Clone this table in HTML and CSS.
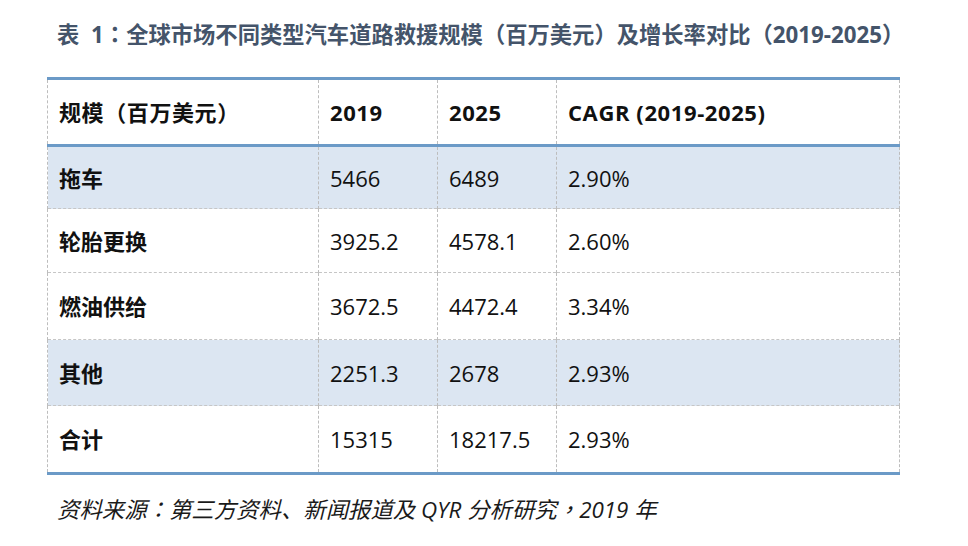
FILE: index.html
```html
<!DOCTYPE html>
<html lang="zh-CN">
<head>
<meta charset="utf-8">
<link rel="stylesheet" href="styles.css">
</head>
<body>
<div class="page">
  <h1 class="title">表 1<span class="pc" lang="zh-TW">：</span>全球市场不同类型汽车道路救援规模（百万美元）及增长率对比（2019-2025）</h1>
  <table class="data">
    <thead>
      <tr>
        <th class="c1">规模（百万美元）</th>
        <th class="c2">2019</th>
        <th class="c3">2025</th>
        <th class="c4">CAGR (2019-2025)</th>
      </tr>
    </thead>
    <tbody>
      <tr class="band r1"><td class="name">拖车</td><td>5466</td><td>6489</td><td>2.90%</td></tr>
      <tr class="r2"><td class="name">轮胎更换</td><td>3925.2</td><td>4578.1</td><td>2.60%</td></tr>
      <tr class="r3"><td class="name">燃油供给</td><td>3672.5</td><td>4472.4</td><td>3.34%</td></tr>
      <tr class="band r4"><td class="name">其他</td><td>2251.3</td><td>2678</td><td>2.93%</td></tr>
      <tr class="r5"><td class="name">合计</td><td>15315</td><td>18217.5</td><td>2.93%</td></tr>
    </tbody>
  </table>
  <p class="source">资料来源<span class="pc" lang="zh-TW">：</span>第三方资料、新闻报道及 QYR 分析研究<span class="pc" lang="zh-TW">，</span>2019 年</p>
</div>
</body>
</html>
```

FILE: styles.css
```css
html, body {
  margin: 0;
  padding: 0;
  background: #ffffff;
}

body {
  font-family: "Open Sans", "Noto Sans CJK SC", sans-serif;
  color: #111111;
}

.pc {
  font-family: "Noto Sans CJK TC", "Noto Sans CJK SC", sans-serif;
}

.page {
  padding: 17px 0 0 47px;
  width: 853px;
}

.title {
  margin: 0 0 26px 10px;
  font-size: 22.3px;
  word-spacing: 6px;
  line-height: 32px;
  font-weight: 700;
  color: #44546a;
  white-space: nowrap;
}

.data {
  width: 853px;
  border-collapse: collapse;
  table-layout: fixed;
  border-top: 3px solid #6b9ac7;
  border-bottom: 3px solid #6b9ac7;
  border-left: 1px dashed #bdbdbd;
  border-right: 1px dashed #bdbdbd;
}

.data th, .data td {
  text-align: left;
  padding: 0 0 0 11px;
  font-size: 22px;
  line-height: 30px;
  border-left: 1px dashed #bdbdbd;
  border-right: 1px dashed #bdbdbd;
  vertical-align: middle;
}

.data th {
  height: 64px;
  font-weight: 700;
  letter-spacing: 0.6px;
  border-bottom: 3px solid #6b9ac7;
}

.c1 { width: 259px; }
.c2 { width: 107px; }
.c3 { width: 107px; }

.data td {
  font-weight: 400;
  border-top: 1px dashed #c6c6c6;
}

.data td.name {
  font-weight: 700;
}

.r1 td { height: 61px; }
.r2 td { height: 63px; }
.r3 td { height: 66px; }
.r4 td { height: 65px; }
.r5 td { height: 66px; }

.band td {
  background: #dce6f2;
}

.source {
  margin: 17px 0 0 10px;
  font-size: 22.4px;
  line-height: 32px;
  font-style: italic;
  color: #1a1a1a;
  white-space: nowrap;
}
```
